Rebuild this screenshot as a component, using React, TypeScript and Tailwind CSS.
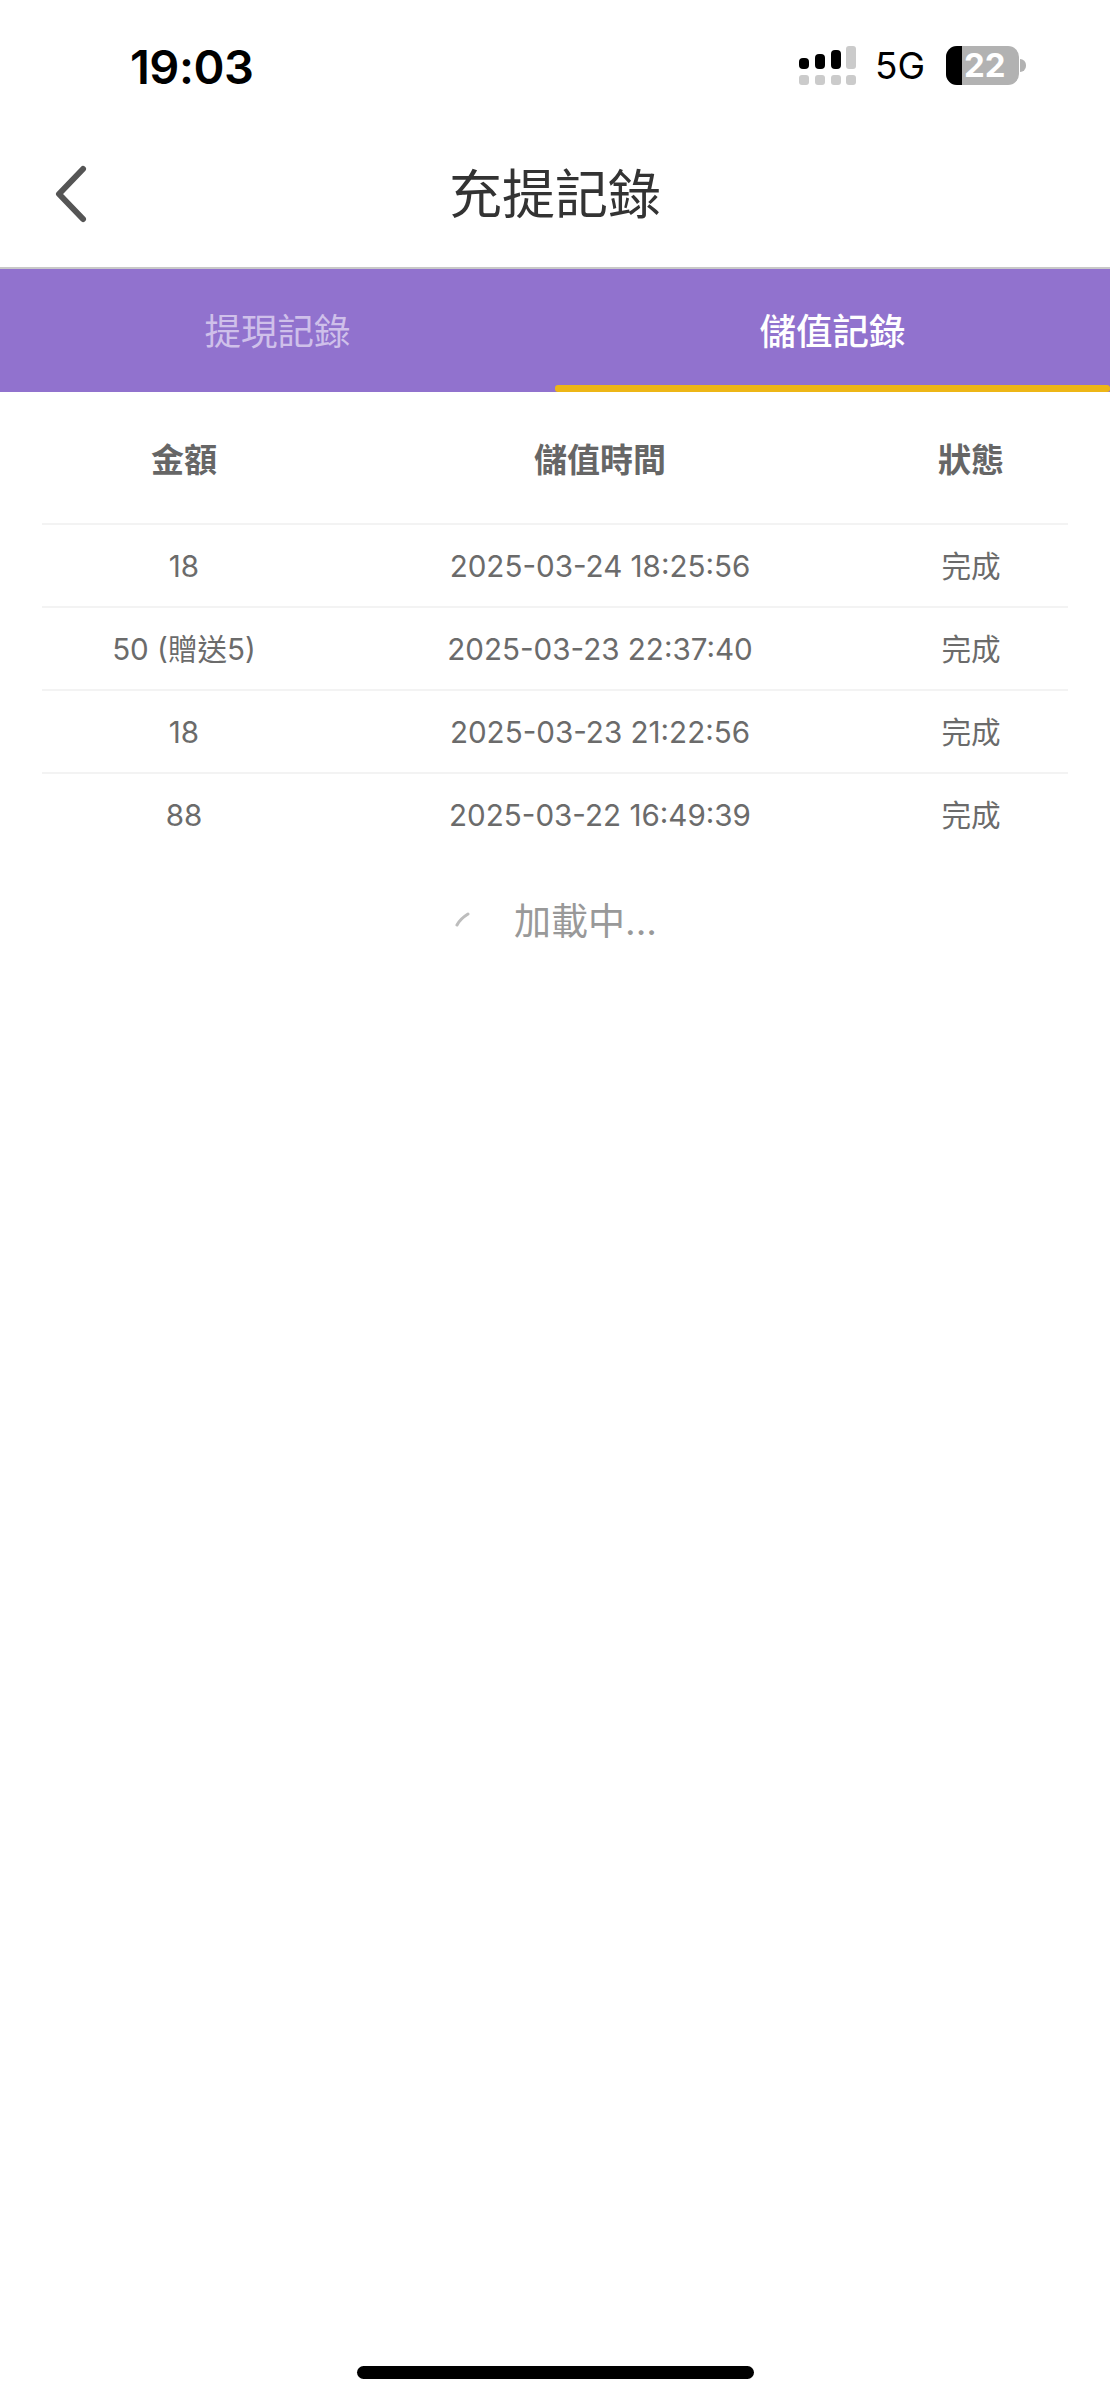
const rows = [
  ["18", "2025-03-24 18:25:56"],
  ["50 (贈送5)", "2025-03-23 22:37:40"],
  ["18", "2025-03-23 21:22:56"],
  ["88", "2025-03-22 16:49:39"],
];

function Signal() {
  return (
    <svg width="58" height="39" viewBox="0 0 58 39" className="block">
      <rect x="0" y="12" width="10" height="11" rx="4" fill="#000" />
      <rect x="16" y="8" width="10" height="15" rx="4" fill="#000" />
      <rect x="32" y="4" width="10" height="19" rx="4" fill="#000" />
      <rect x="47" y="0" width="10" height="23" rx="3" fill="#cbcbcb" />
      <rect x="0" y="29" width="10" height="10" rx="3" fill="#cbcbcb" />
      <rect x="16" y="29" width="10" height="10" rx="3" fill="#cbcbcb" />
      <rect x="32" y="29" width="10" height="10" rx="3" fill="#cbcbcb" />
      <rect x="47" y="29" width="10" height="10" rx="3" fill="#cbcbcb" />
    </svg>
  );
}

function Battery() {
  return (
    <div className="flex items-center gap-[1px]">
      <div className="flex h-[39px] w-[73px] overflow-hidden rounded-[11px] bg-[#b2b2b2]">
        <div className="h-full w-[16px] shrink-0 bg-black" />
        <div className="flex flex-1 items-center pl-[2px] text-[33px] leading-none font-bold text-white">22</div>
      </div>
      <div className="h-[13px] w-[6px] rounded-r-full bg-[#b2b2b2]" />
    </div>
  );
}

function Back() {
  return (
    <svg width="40" height="60" viewBox="0 0 40 60" className="block">
      <path d="M33 5 L9 30 L33 55" fill="none" stroke="#555555" strokeWidth="6" strokeLinecap="round" strokeLinejoin="round" />
    </svg>
  );
}

export default function App() {
  return (
    <div className="flex min-h-[2400px] w-[1110px] flex-col bg-white font-['Inter','Noto_Sans_CJK_TC',sans-serif]">
      <div className="flex h-[132px] items-start justify-between pt-[43px] pr-[84px] pl-[130px]">
        <div className="text-[47px] leading-[47px] font-semibold tracking-[-0.5px] text-black">19:03</div>
        <div className="mt-[3px] flex items-center">
          <Signal />
          <div className="mx-[18px] w-[53px] text-[37px] leading-[39px] whitespace-nowrap text-black">5G</div>
          <Battery />
        </div>
      </div>

      <div className="relative flex h-[137px] items-center justify-center border-b-2 border-[#c8c8c8] pb-[10px]">
        <div className="absolute top-[32px] left-[50px]"><Back /></div>
        <div className="text-[53px] leading-[70px] text-[#333333]">充提記錄</div>
      </div>

      <div className="flex h-[123px] bg-[#9172ce]">
        <div className="flex flex-1 items-center justify-center pt-[3px] text-[36.5px] text-[#cfc0ea]">提現記錄</div>
        <div className="relative flex flex-1 items-center justify-center pt-[3px] text-[36.5px] font-medium text-white">
          儲值記錄
          <div className="absolute right-0 bottom-0 left-0 h-[7px] rounded-[3px] bg-[#edb616]" />
        </div>
      </div>

      <div className="mx-[42px] flex flex-col">
        <div className="grid h-[131px] grid-cols-[284px_1fr_194px] items-center pt-[7px] text-[33px] font-bold text-[#666666]">
          <div className="text-center">金額</div>
          <div className="text-center">儲值時間</div>
          <div className="text-center">狀態</div>
        </div>
        {rows.map((r) => (
          <div key={r[1]} className="grid h-[83px] grid-cols-[284px_1fr_194px] items-center border-t-2 border-[#f3f3f3] pt-[2px] text-[29.6px] text-[#6b6b6b]">
            <div className="text-center">{r[0]}</div>
            <div className="text-center">{r[1]}</div>
            <div className="text-center">完成</div>
          </div>
        ))}
      </div>

      <div className="mt-[37px] ml-[455px] flex items-center">
        <svg width="16" height="16" viewBox="0 0 16 16" className="mb-[6px] block">
          <path d="M2 14 Q5 8 13 3" fill="none" stroke="#bdbdbd" strokeWidth="3" strokeLinecap="round" />
        </svg>
        <div className="ml-[43px] text-[37px] leading-[60px] text-[#999999]">加載中...</div>
      </div>

      <div className="mt-auto mb-[21px] h-[13px] w-[397px] self-center rounded-full bg-black" />
    </div>
  );
}
